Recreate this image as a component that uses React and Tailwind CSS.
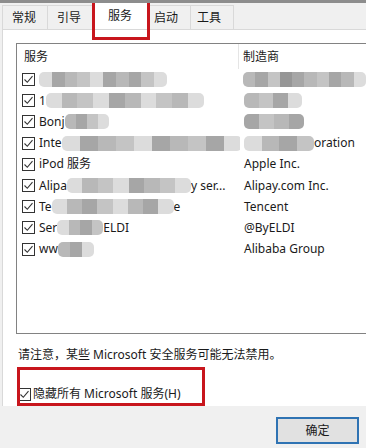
import React from 'react';

const font = "font-['Noto_Sans','Noto_Sans_CJK_SC',sans-serif]";

function Check() {
  return (
    <span className="w-[13px] h-[13px] border border-[#333] bg-white flex items-center justify-center shrink-0">
      <svg width="11" height="11" viewBox="0 0 11 11" fill="none">
        <path d="M1.5 5.5 L4.3 8.3 L9.5 2.2" stroke="#333" strokeWidth="1.1" />
      </svg>
    </span>
  );
}

// pixelated privacy smudge
function Smudge({ w, shades }) {
  return (
    <span className="inline-flex h-[15px] rounded-[5px] overflow-hidden blur-[0.5px] align-middle" style={{ width: w }}>
      {shades.map((s, i) => (
        <span key={i} className="flex-1 h-full" style={{ backgroundColor: s }} />
      ))}
    </span>
  );
}

const a = '#c4c4c4', b = '#a6a6a6', c = '#b8b8b8', d = '#dcdcdc', e = '#969696';

const rows = [
  { name: [<Smudge key="s" w={128} shades={[d, b, c, a, d, b, c, b, a, d]} />], co: <Smudge w={123} shades={[c, b, a, e, b, c, a, b, c, d]} /> },
  { name: ['1', <Smudge key="s" w={158} shades={[d, c, a, d, b, c, d, a, c, d]} />], co: <Smudge w={58} shades={[c, a, b, d]} /> },
  { name: ['Bonj', <Smudge key="s" w={44} shades={[c, b, a, d]} />], co: <Smudge w={60} shades={[b, a, c, b]} /> },
  { name: ['Inte', <Smudge key="s" w={180} shades={[d, b, c, a, d, b, c, a, b, d]} />], co: <><Smudge w={70} shades={[d, c, b, a]} /><span>oration</span></> },
  { name: ['iPod 服务'], co: 'Apple Inc.' },
  { name: ['Alipa', <Smudge key="s" w={124} shades={[d, c, a, d, b, c, a, d]} />, 'y ser...'], co: 'Alipay.com Inc.' },
  { name: ['Te', <Smudge key="s" w={122} shades={[d, c, b, a, d, c, b, d]} />, 'e'], co: 'Tencent' },
  { name: ['Ser', <Smudge key="s" w={46} shades={[d, c, b, a]} />, 'ELDI'], co: '@ByELDI' },
  { name: ['ww', <Smudge key="s" w={36} shades={[c, b, d]} />], co: 'Alibaba Group' },
];

export default function App() {
  return (
    <div className={`w-[366px] h-[448px] bg-[#f0f0f0] overflow-hidden flex flex-col border-t-[3px] border-[#8d8d8d] text-[12px] text-[#1a1a1a] relative ${font}`}>
      {/* Tabs */}
      <div className="flex items-end h-[26px] pl-[2px] shrink-0">
        {['常规', '引导'].map(t => (
          <div key={t} className="h-[24px] px-[9px] border border-b-0 border-[#d9d9d9] -mr-px flex items-center bg-[#f0f0f0] w-[46px]">{t}</div>
        ))}
        <div className="h-[28px] w-[56px] bg-white border border-b-0 border-[#d9d9d9] flex items-center justify-center -mr-px relative z-10">服务</div>
        {['启动', '工具'].map(t => (
          <div key={t} className="h-[24px] px-[6px] border border-b-0 border-[#d9d9d9] -mr-px flex items-center bg-[#f0f0f0] w-[44px]">{t}</div>
        ))}
      </div>

      {/* Pane */}
      <div className="ml-[2px] h-[377px] bg-white border-t border-l border-[#d9d9d9] flex flex-col pl-[13px] pt-[13px] shrink-0">
        <div className="h-[291px] border border-r-0 border-[#828282] flex flex-col">
          <div className="flex h-[25px] items-center shrink-0">
            <div className="w-[222px] pl-[7px] border-r border-[#e5e5e5] h-full flex items-center">服务</div>
            <div className="pl-[4px]">制造商</div>
          </div>
          <div className="flex flex-col">
            {rows.map((r, i) => (
              <div key={i} className="flex items-center h-[21.2px] whitespace-nowrap">
                <div className="w-[223px] pl-[5px] flex items-center gap-[4px] overflow-hidden">
                  <Check />
                  <span className="flex items-center">
                    {r.name.map((n, j) => <React.Fragment key={j}>{n}</React.Fragment>)}
                  </span>
                </div>
                <div className="pl-[4px] flex items-center">{r.co}</div>
              </div>
            ))}
          </div>
        </div>

        <div className="mt-[12px] ml-[2px] leading-[17px]">请注意，某些 Microsoft 安全服务可能无法禁用。</div>

        <div className="mt-[22px] ml-[2px] flex items-center gap-[2px]">
          <Check />
          <span>隐藏所有 Microsoft 服务(H)</span>
        </div>
      </div>

      {/* Buttons */}
      <div className="flex justify-end pr-[7px] pt-[11px]">
        <button className="w-[83px] h-[27px] bg-[#e1e1e1] border-2 border-[#2f73b3] flex items-center justify-center">确定</button>
      </div>

      {/* red annotation boxes */}
      <div className="absolute left-[92px] top-[-3px] w-[58px] h-[40px] border-[3px] border-[#c8161d] z-20" />
      <div className="absolute left-[17px] top-[364px] w-[188px] h-[39px] border-[3px] border-[#c8161d] z-20" />
    </div>
  );
}
